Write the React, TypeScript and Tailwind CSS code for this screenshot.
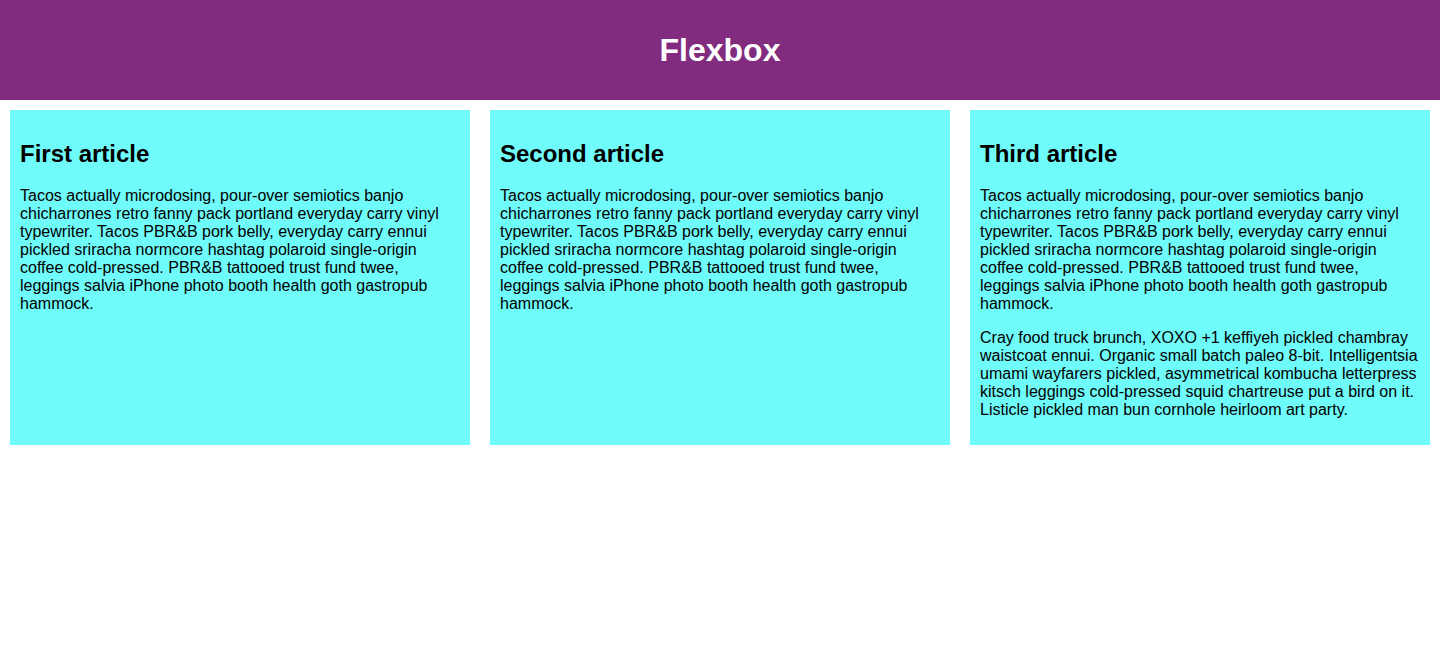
import React from "react";

const p1 =
  "Tacos actually microdosing, pour-over semiotics banjo chicharrones retro fanny pack portland everyday carry vinyl typewriter. Tacos PBR&B pork belly, everyday carry ennui pickled sriracha normcore hashtag polaroid single-origin coffee cold-pressed. PBR&B tattooed trust fund twee, leggings salvia iPhone photo booth health goth gastropub hammock.";
const p2 =
  "Cray food truck brunch, XOXO +1 keffiyeh pickled chambray waistcoat ennui. Organic small batch paleo 8-bit. Intelligentsia umami wayfarers pickled, asymmetrical kombucha letterpress kitsch leggings cold-pressed squid chartreuse put a bird on it. Listicle pickled man bun cornhole heirloom art party.";

function Article({ title, paras }: { title: string; paras: string[] }) {
  return (
    <article className="flex-1 m-[10px] p-[10px] bg-[#70fbfb] text-black">
      <h2 className="text-[24px] leading-[27.6px] font-bold my-[19.92px]">{title}</h2>
      {paras.map((p, i) => (
        <p key={i} className="text-[16px] leading-[18px] my-[16px]">
          {p}
        </p>
      ))}
    </article>
  );
}

export default function App() {
  return (
    <div className="bg-white min-h-[657px] font-['Liberation_Sans',Helvetica,Arial,sans-serif]">
      <header className="bg-[#812c7e] h-[100px]">
        <h1 className="text-center text-white text-[32px] font-bold leading-[100px] m-0">Flexbox</h1>
      </header>
      <section className="flex">
        <Article title="First article" paras={[p1]} />
        <Article title="Second article" paras={[p1]} />
        <Article title="Third article" paras={[p1, p2]} />
      </section>
    </div>
  );
}
